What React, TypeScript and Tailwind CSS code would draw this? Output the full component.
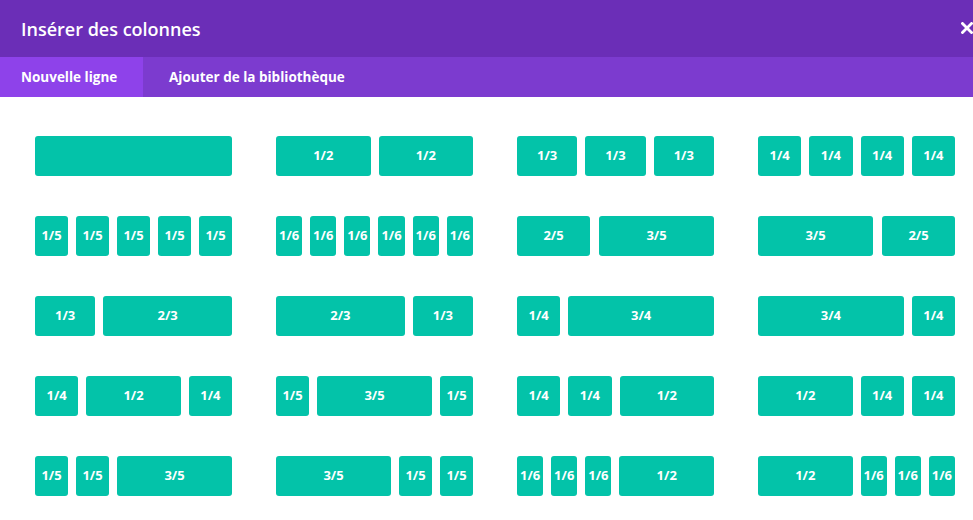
import React from "react";

const W: Record<string, string> = {
  "1/1": "w-[197px]",
  "1/2": "w-[94.5px]",
  "1/3": "w-[60.33px]",
  "2/3": "w-[128.67px]",
  "1/4": "w-[43.25px]",
  "3/4": "w-[145.75px]",
  "1/5": "w-[33px]",
  "2/5": "w-[73px]",
  "3/5": "w-[115px]",
  "1/6": "w-[26.17px]",
};

const layouts: string[][] = [
  ["1/1"],
  ["1/2", "1/2"],
  ["1/3", "1/3", "1/3"],
  ["1/4", "1/4", "1/4", "1/4"],
  ["1/5", "1/5", "1/5", "1/5", "1/5"],
  ["1/6", "1/6", "1/6", "1/6", "1/6", "1/6"],
  ["2/5", "3/5"],
  ["3/5", "2/5"],
  ["1/3", "2/3"],
  ["2/3", "1/3"],
  ["1/4", "3/4"],
  ["3/4", "1/4"],
  ["1/4", "1/2", "1/4"],
  ["1/5", "3/5", "1/5"],
  ["1/4", "1/4", "1/2"],
  ["1/2", "1/4", "1/4"],
  ["1/5", "1/5", "3/5"],
  ["3/5", "1/5", "1/5"],
  ["1/6", "1/6", "1/6", "1/2"],
  ["1/2", "1/6", "1/6", "1/6"],
];

export default function App() {
  return (
    <div
      className="w-[973px] h-[520px] overflow-hidden bg-white relative"
      style={{ fontFamily: '"Open Sans", "Noto Sans", sans-serif' }}
    >
      <div className="h-[57px] bg-[#6b2eb7] flex items-center pl-[21px]">
        <span className="text-white text-[18px] font-semibold leading-none">
          Insérer des colonnes
        </span>
      </div>
      <svg
        className="absolute left-[961px] top-[22px]"
        width="12"
        height="12"
        viewBox="0 0 12 12"
      >
        <path d="M1.5 1.5 L10.5 10.5 M10.5 1.5 L1.5 10.5" stroke="white" strokeWidth="2.8" strokeLinecap="square" />
      </svg>
      <div className="h-[40px] bg-[#7c3bcf] flex">
        <div className="w-[143px] h-full bg-[#8e42ea] flex items-center pl-[21px] text-white text-[13.5px] font-bold">
          Nouvelle ligne
        </div>
        <div className="h-full flex items-center pl-[26px] text-white text-[13.5px] font-bold">
          Ajouter de la bibliothèque
        </div>
      </div>
      <div className="grid grid-cols-[197px_197px_197px_197px] gap-x-[44px] gap-y-[40px] pl-[35px] pt-[39px]">
        {layouts.map((row, i) => (
          <div key={i} className="flex justify-between h-[40px]">
            {row.map((f, j) => (
              <div
                key={j}
                className={`${W[f]} shrink-0 h-[40px] rounded-[3px] bg-[#03c3a9] flex items-center justify-center text-white text-[13px] font-bold`}
              >
                {f === "1/1" ? "" : f}
              </div>
            ))}
          </div>
        ))}
      </div>
    </div>
  );
}
